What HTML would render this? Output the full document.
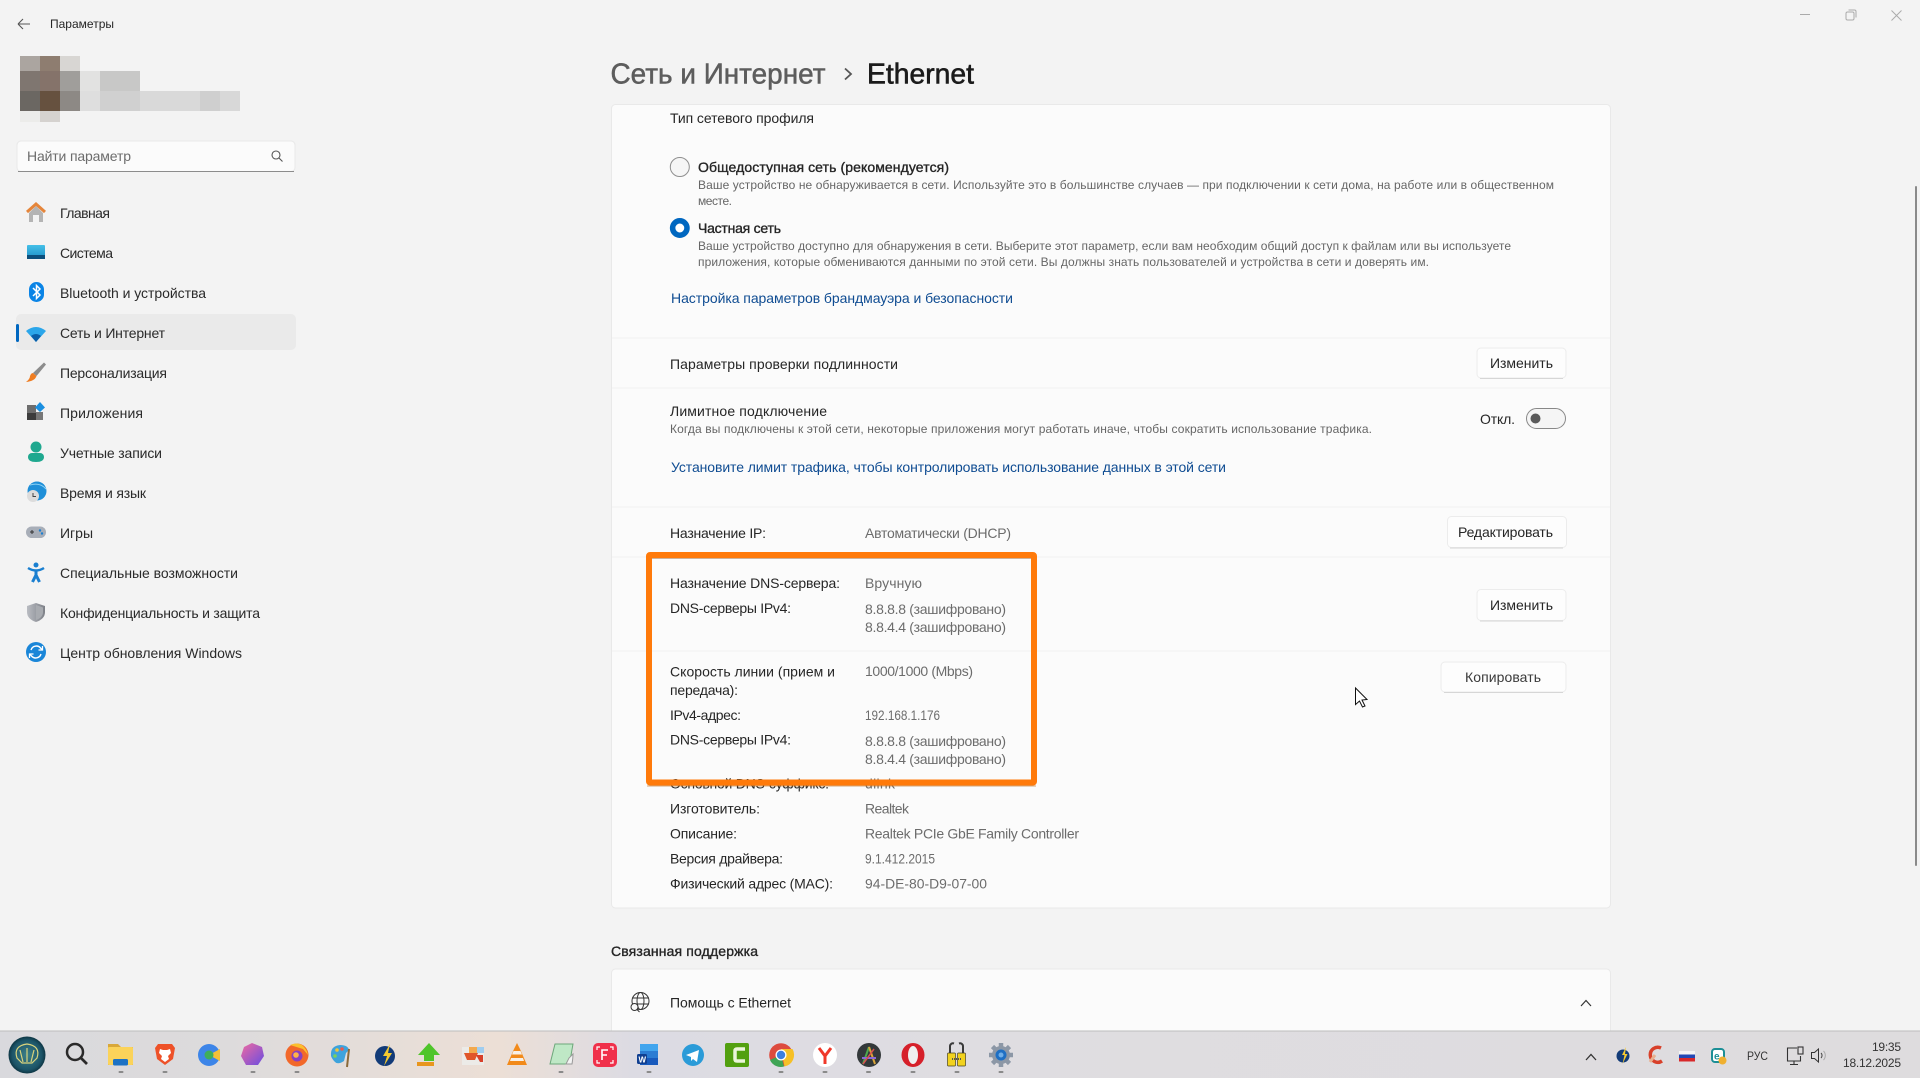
<!DOCTYPE html>
<html lang="ru"><head><meta charset="utf-8"><title>Параметры</title>
<style>
html,body{margin:0;padding:0;background:#f3f3f3;overflow:hidden;width:1920px;height:1078px}
svg{display:block;position:absolute;left:0;top:0;filter:blur(.3px)}
text{font-family:"Liberation Sans","Noto Sans CJK SC",sans-serif;font-size:14px;fill:#262626;white-space:pre}
.s{font-size:12px;fill:#666}
.v{fill:#6c6c6c}
.b{stroke:#1f1f1f;stroke-width:.35px}
.l{fill:#0f4c92}
.n{fill:#2a2a2a}
</style></head><body>
<svg width="1920" height="1078" viewBox="0 0 1920 1078" xmlns="http://www.w3.org/2000/svg">
<defs>
<linearGradient id="tb" x1="0" x2="1" y1="0" y2="0"><stop offset="0" stop-color="#d9d9dd"/><stop offset=".12" stop-color="#dddbdc"/><stop offset=".26" stop-color="#ecdfd6"/><stop offset=".33" stop-color="#dcdbe3"/><stop offset=".5" stop-color="#dfdde1"/><stop offset="1" stop-color="#dedcde"/></linearGradient>
<linearGradient id="sh" x1="0" x2="1"><stop offset="0" stop-color="#b9bcc2"/><stop offset="1" stop-color="#7d8087"/></linearGradient>
<linearGradient id="sys" x1="0" x2="0" y1="0" y2="1"><stop offset="0" stop-color="#45c0e8"/><stop offset="1" stop-color="#1c8ec6"/></linearGradient>
<linearGradient id="poly" x1="0" x2="1" y1="0" y2="1"><stop offset="0" stop-color="#f06aa0"/><stop offset="1" stop-color="#6a4de0"/></linearGradient>
<radialGradient id="orb"><stop offset="0" stop-color="#3d8088"/><stop offset=".8" stop-color="#1c5468"/><stop offset="1" stop-color="#0e3644"/></radialGradient>
</defs>

<rect width="1920" height="1078" fill="#f3f3f3"/>

<!-- title bar -->
<path d="M18 24H30M18 24l5-5M18 24l5 5" fill="none" stroke="#555" stroke-width="1.1"/>
<text x="50" y="28" style="font-size:12px" textLength="64">Параметры</text>
<g fill="none" stroke="#aaa" stroke-width="1"><path d="M1800 14.5h10"/><rect x="1846" y="12" width="8" height="8" rx="1.5"/><path d="M1848.5 10h6a1.5 1.5 0 0 1 1.500 1.500v6"/><path d="M1891.500 10.500l10 10M1901.500 10.500l-10 10"/></g>

<!-- blurred account -->
<g>
<rect x="20" y="56" width="20" height="15" fill="#aba5a0"/><rect x="40" y="56" width="20" height="15" fill="#8e7d70"/><rect x="60" y="56" width="20" height="15" fill="#d8d6d3"/>
<rect x="20" y="71" width="20" height="20" fill="#7f7670"/><rect x="40" y="71" width="20" height="20" fill="#85736a"/><rect x="60" y="71" width="20" height="20" fill="#a09e9b"/><rect x="80" y="71" width="20" height="20" fill="#e2e2e1"/><rect x="100" y="71" width="40" height="20" fill="#c8c8c7"/>
<rect x="20" y="91" width="20" height="20" fill="#6b6762"/><rect x="40" y="91" width="20" height="20" fill="#66513f"/><rect x="60" y="91" width="20" height="20" fill="#8d8985"/><rect x="80" y="91" width="20" height="20" fill="#dedede"/><rect x="100" y="91" width="40" height="20" fill="#d0d0d0"/><rect x="140" y="91" width="60" height="20" fill="#d9d9d9"/><rect x="200" y="91" width="20" height="20" fill="#cfcfcf"/><rect x="220" y="91" width="20" height="20" fill="#d8d8d8"/>
<rect x="20" y="111" width="20" height="11" fill="#ececea"/><rect x="40" y="111" width="20" height="11" fill="#d5d2cf"/>
</g>

<!-- search box -->
<rect x="17" y="141" width="278" height="30.500" rx="4" fill="#fbfbfb" stroke="#e8e8e8"/>
<path d="M18 171.500H294" stroke="#8c8c8c"/>
<text x="27" y="161" class="v" textLength="104">Найти параметр</text>
<circle cx="276" cy="155" r="4" fill="none" stroke="#555" stroke-width="1.100"/><path d="M279 158l3.500 3.500" stroke="#555" stroke-width="1.100"/>

<!-- nav -->
<rect x="16" y="314" width="280" height="36" rx="5" fill="#eaeaea"/>
<rect x="16" y="324" width="3" height="18" rx="1.500" fill="#0067c0"/>
<g class="nav">
<text class="n" x="60" y="218" textLength="50">Главная</text>
<text class="n" x="60" y="258" textLength="53">Система</text>
<text class="n" x="60" y="298" textLength="146">Bluetooth и устройства</text>
<text class="n" x="60" y="338" textLength="105">Сеть и Интернет</text>
<text class="n" x="60" y="378" textLength="107">Персонализация</text>
<text class="n" x="60" y="418" textLength="83">Приложения</text>
<text class="n" x="60" y="458" textLength="102">Учетные записи</text>
<text class="n" x="60" y="498" textLength="86">Время и язык</text>
<text class="n" x="60" y="538" textLength="33">Игры</text>
<text class="n" x="60" y="578" textLength="178">Специальные возможности</text>
<text class="n" x="60" y="618" textLength="200">Конфиденциальность и защита</text>
<text class="n" x="60" y="658" textLength="182">Центр обновления Windows</text>
</g>
<!-- nav icons -->
<path d="M29 213L36 206L43 213V222H39V215H33V222H29Z" fill="#b4b4b4"/><path d="M27 212L36 204L45 212" fill="none" stroke="#e5853a" stroke-width="3"/>
<rect x="27" y="245" width="18" height="14" rx="1" fill="url(#sys)"/><rect x="27" y="255" width="18" height="4" fill="#0c4f7c"/>
<rect x="29" y="282" width="15" height="20" rx="7.500" fill="#0a84e6"/><path d="M33 288L40 295L36.500 298.500V285.500L40 289L33 296" fill="none" stroke="#fff" stroke-width="1.500"/>
<path d="M26 331Q36 323 46 331L36 342Z" fill="#2ba6ea"/><path d="M31 336Q36 332 41 336L36 342Z" fill="#0a5ea8"/>
<path d="M44 362.500L46 364.500L36.500 376L33 373Z" fill="#8c8c8c"/><path d="M33 373L36.500 376Q35 381 26 382Q30 379 30 376Q31 373 33 373Z" fill="#ef7d22"/>
<rect x="27" y="405" width="9" height="8" fill="#6d6d6d"/><rect x="27" y="413" width="9" height="7" fill="#3c3c3c"/><rect x="36" y="412" width="7" height="8" fill="#777"/><path d="M40 402L45 407.500L40 412L35 407.500Z" fill="#1a8fe0"/>
<circle cx="36" cy="447" r="5.500" fill="#1fa88f"/><path d="M28 457a4 4 0 0 1 4-4h8a4 4 0 0 1 4 4q0 5-8 5t-8-5z" fill="#1fa88f"/>
<circle cx="37" cy="491" r="9.500" fill="#1f8fd8"/><path d="M30 485Q40 482 46 489" stroke="#8fd3f5" fill="none"/><circle cx="33" cy="496" r="6" fill="#dcdcdc"/><path d="M33 493v3.500h3" fill="none" stroke="#444"/>
<rect x="26" y="526.500" width="20" height="11.500" rx="5.700" fill="#a8aeb8"/><path d="M30 532h4M32 530v4" stroke="#333"/><circle cx="40" cy="530.500" r="1.200" fill="#1d7fd0"/><circle cx="42" cy="533.500" r="1.200" fill="#1d7fd0"/>
<circle cx="36" cy="565" r="2.500" fill="#1a7fd0"/><path d="M28 568Q36 573 44 568" fill="none" stroke="#1a7fd0" stroke-width="2.500"/><path d="M36 570V575L32.500 582M36 575L39.500 582" fill="none" stroke="#1a7fd0" stroke-width="3"/>
<path d="M36 603L45 606V612Q45 619 36 622Q27 619 27 612V606Z" fill="url(#sh)"/><path d="M36 605L43 607.500V612Q43 617.500 36 620Z" fill="#a8abb0"/>
<circle cx="36" cy="652" r="10" fill="#1a86d8"/><path d="M31 650a5.500 5.500 0 0 1 9.500-2l1.500 1.500M41 654a5.500 5.500 0 0 1-9.500 2L30 654.500" fill="none" stroke="#fff" stroke-width="1.400"/><path d="M42.500 646v4h-4M29.500 658v-4h4" fill="none" stroke="#fff" stroke-width="1.300"/>

<!-- header -->
<text x="610.500" y="83.500" textLength="215" lengthAdjust="spacingAndGlyphs" style="font-size:28.500px;fill:#5d5d5d;stroke:#5d5d5d;stroke-width:.5px">Сеть и Интернет</text>
<path d="M845 68.500l6 5.500-6 5.500" fill="none" stroke="#555" stroke-width="1.800"/>
<text x="867" y="83.500" textLength="107" lengthAdjust="spacingAndGlyphs" style="font-size:28.500px;fill:#1b1b1b;stroke:#1b1b1b;stroke-width:.6px">Ethernet</text>

<!-- card 1 -->
<rect x="611.500" y="104.500" width="999" height="803.500" rx="4" fill="#fbfbfb" stroke="#e9e9e9"/>
<path d="M612 338H1610M612 388H1610M612 507H1610M612 557H1610M612 651H1610" stroke="#f1f1f1"/>

<text x="670" y="123" textLength="144">Тип сетевого профиля</text>
<circle cx="679.800" cy="167" r="9.500" fill="#f6f6f6" stroke="#8f8f8f"/>
<text class="b" x="698" y="172" textLength="251">Общедоступная сеть (рекомендуется)</text>
<text class="s" x="698" y="189" textLength="856">Ваше устройство не обнаруживается в сети. Используйте это в большинстве случаев — при подключении к сети дома, на работе или в общественном</text>
<text class="s" x="698" y="205" textLength="34">месте.</text>
<circle cx="679.800" cy="228" r="7.200" fill="#fff" stroke="#0067c0" stroke-width="5.500"/>
<text class="b" x="698" y="233" textLength="83">Частная сеть</text>
<text class="s" x="698" y="250" textLength="813">Ваше устройство доступно для обнаружения в сети. Выберите этот параметр, если вам необходим общий доступ к файлам или вы используете</text>
<text class="s" x="698" y="266" textLength="731">приложения, которые обмениваются данными по этой сети. Вы должны знать пользователей и устройства в сети и доверять им.</text>
<text class="l" x="671" y="303" textLength="342">Настройка параметров брандмауэра и безопасности</text>

<text x="670" y="369" textLength="228">Параметры проверки подлинности</text>
<g><rect x="1477" y="348" width="89" height="30" rx="4" fill="#fdfdfd" stroke="#ececec"/><path d="M1480 378.500H1563" stroke="#d6d6d6"/><text x="1490" y="368" textLength="63">Изменить</text></g>

<text x="670" y="416" textLength="157">Лимитное подключение</text>
<text class="s" x="670" y="433" textLength="702">Когда вы подключены к этой сети, некоторые приложения могут работать иначе, чтобы сократить использование трафика.</text>
<text class="l" x="671" y="472" textLength="555">Установите лимит трафика, чтобы контролировать использование данных в этой сети</text>
<text x="1480" y="424" textLength="35">Откл.</text>
<rect x="1526.500" y="408.500" width="39" height="20" rx="10" fill="#f5f5f5" stroke="#888"/><circle cx="1535.500" cy="418.500" r="5" fill="#5a5a5a"/>

<text x="670" y="538" textLength="96">Назначение IP:</text>
<text class="v" x="865" y="538" textLength="146">Автоматически (DHCP)</text>
<g><rect x="1447.500" y="516.500" width="119" height="31" rx="4" fill="#fdfdfd" stroke="#ececec"/><path d="M1450 548H1563" stroke="#d6d6d6"/><text x="1458" y="537" textLength="95">Редактировать</text></g>
<g><rect x="1477" y="589.500" width="89" height="31" rx="4" fill="#fdfdfd" stroke="#ececec"/><path d="M1480 621H1563" stroke="#d6d6d6"/><text x="1490" y="610" textLength="63">Изменить</text></g>
<g><rect x="1441" y="662" width="125" height="30" rx="4" fill="#fdfdfd" stroke="#ececec"/><path d="M1444 692.500H1563" stroke="#d6d6d6"/><text x="1465" y="682" textLength="76" style="fill:#3a3a3a">Копировать</text></g>

<!-- clipped row -->
<text x="670" y="788.500" textLength="159">Основной DNS-суффикс:</text>
<text class="v" x="865" y="788.500" textLength="30">dlink</text>

<!-- orange highlight -->
<rect x="649" y="555" width="385" height="227.500" rx="1" fill="none" stroke="#ff7a0a" stroke-width="6"/>
<path d="M652 558.500H1031" stroke="#a06a3a" stroke-opacity=".5"/>
<path d="M647 786H1036" stroke="#b96a20" stroke-opacity=".6"/>

<text x="670" y="588" textLength="170">Назначение DNS-сервера:</text>
<text class="v" x="865" y="588" textLength="57">Вручную</text>
<text x="670" y="613" textLength="121">DNS-серверы IPv4:</text>
<text class="v" x="865" y="614" textLength="141">8.8.8.8 (зашифровано)</text>
<text class="v" x="865" y="632" textLength="141">8.8.4.4 (зашифровано)</text>
<text x="670" y="676.500" textLength="165">Скорость линии (прием и</text>
<text x="670" y="695" textLength="68">передача):</text>
<text class="v" x="865" y="676" textLength="108">1000/1000 (Mbps)</text>
<text x="670" y="720" textLength="71">IPv4-адрес:</text>
<text class="v" x="865" y="720" textLength="75" lengthAdjust="spacingAndGlyphs">192.168.1.176</text>
<text x="670" y="744.500" textLength="121">DNS-серверы IPv4:</text>
<text class="v" x="865" y="746" textLength="141">8.8.8.8 (зашифровано)</text>
<text class="v" x="865" y="764" textLength="141">8.8.4.4 (зашифровано)</text>

<text x="670" y="813.500" textLength="90">Изготовитель:</text>
<text class="v" x="865" y="813.500" textLength="44">Realtek</text>
<text x="670" y="838.500" textLength="67">Описание:</text>
<text class="v" x="865" y="838.500" textLength="214">Realtek PCIe GbE Family Controller</text>
<text x="670" y="863.500" textLength="113">Версия драйвера:</text>
<text class="v" x="865" y="863.500" textLength="70" lengthAdjust="spacingAndGlyphs">9.1.412.2015</text>
<text x="670" y="888.500" textLength="163">Физический адрес (MAC):</text>
<text class="v" x="865" y="888.500" textLength="122" lengthAdjust="spacingAndGlyphs">94-DE-80-D9-07-00</text>

<text class="b" x="611" y="956" textLength="147">Связанная поддержка</text>

<!-- card 2 -->
<rect x="611.500" y="969" width="999" height="80" rx="4" fill="#fbfbfb" stroke="#e9e9e9"/>
<g fill="none" stroke="#333" stroke-width="1"><circle cx="640.500" cy="1001" r="8.500"/><ellipse cx="640.500" cy="1001" rx="3.500" ry="8.500"/><path d="M632 998h17M632 1004h17"/><circle cx="634.500" cy="1007" r="3.500" fill="#fbfbfb"/><path d="M637 1009.500l2.500 2.500"/></g>
<text x="670" y="1007.500" textLength="121">Помощь с Ethernet</text>
<path d="M1581 1006l5-5.500 5 5.500" fill="none" stroke="#333" stroke-width="1.200"/>

<!-- cursor -->
<path d="M1355.500 688V704.500L1359.500 701L1362.500 707L1365 706L1362 700L1367 699.500Z" fill="#fff" stroke="#111" stroke-width="1"/>
<!-- scrollbar -->
<rect x="1915" y="186" width="2" height="680" rx="1" fill="#8a8a8a"/>

<!-- taskbar -->
<rect x="0" y="1031" width="1920" height="47" fill="url(#tb)"/>
<path d="M0 1031H1920" stroke="#bdbdbd"/>

<circle cx="27" cy="1055" r="18.500" fill="url(#orb)"/><path d="M17 1058Q13 1046 27 1044Q41 1046 37 1058L32 1063H22Z M23 1062L20 1050M27 1062V1048M31 1062L34 1050" fill="none" stroke="#d8d27c" stroke-width="1.200"/>
<circle cx="75" cy="1052" r="8" fill="none" stroke="#2a2a2a" stroke-width="2.500"/><path d="M81 1058l6 6" stroke="#2a2a2a" stroke-width="2.700"/>
<path d="M108 1044h10l3 3h12v18h-25z" fill="#d9a83a"/><rect x="108" y="1047" width="25" height="18" rx="1" fill="#fbd35a"/><rect x="113" y="1059" width="15" height="6.500" rx="1.500" fill="#1d72c4"/>
<path d="M158 1044h14l3 4-2 11-8 6-8-6-2-11z" fill="#ee5128"/><path d="M160 1049l3 1h4l3-1 1 4-3 3 1 3-4 3-4-3 1-3-3-3z" fill="#fff"/>
<circle cx="209" cy="1055" r="11" fill="#3d85e8"/><path d="M209 1055l11-6v12z" fill="#f4c038"/><circle cx="209" cy="1055" r="4.500" fill="#3fae5a"/>
<path d="M252 1043l10 4 2 9-6 9h-12l-5-9 3-9z" fill="url(#poly)"/>
<circle cx="297" cy="1055" r="11.500" fill="#f2682a"/><path d="M290 1045q7-3 12 0q5 4 6 10l-5-6z" fill="#fbc02d"/><circle cx="297" cy="1056" r="5.500" fill="#8a3fc0"/><circle cx="296" cy="1055" r="2.800" fill="#ffb347"/>
<path d="M331 1056q-1-10 9-11 8 0 9 5l-3 3-2 8q-6 4-9 1-3-3-4-6z" fill="#3ea3dc"/><circle cx="337" cy="1050" r="1.800" fill="#f2c438"/><circle cx="342" cy="1049" r="1.800" fill="#e85a4f"/><circle cx="335" cy="1056" r="1.800" fill="#7bd15a"/><path d="M349 1049l-2 18" stroke="#8a6a3a" stroke-width="2"/>
<circle cx="385" cy="1056" r="10" fill="#123b78"/><path d="M390 1044l-7 12h4l-3 10 8-13h-4z" fill="#f4c930"/>
<path d="M429 1043l11 12h-6v6h-10v-6h-6z" fill="#4fc52a"/><rect x="417" y="1062" width="17" height="4" fill="#e8961e"/>
<rect x="462" y="1047" width="22" height="18" fill="#ecebe8"/><rect x="476" y="1047" width="8" height="6" fill="#9fcdf0"/><path d="M464 1053h14l-3 7h-8z" fill="#e0562a"/><rect x="469" y="1047" width="8" height="6" fill="#f3a94e"/><path d="M476 1055h7v7h-3z" fill="#d8402a"/>
<path d="M517 1043l3 6 7 16h-20l7-16z" fill="#f28a1a"/><path d="M513.500 1051h7l1.500 3.500h-10zM511 1058h12l1 3h-14z" fill="#f8f0e6"/>
<path d="M555 1044h18l-3 17-4 3h-16z" fill="#bfe8c6" stroke="#6da77a"/><path d="M566 1064l6 0q1-6 1-10l-4 4z" fill="#f3f3f3" stroke="#999"/>
<rect x="593" y="1043" width="24" height="24" rx="5" fill="#f0304a"/><path d="M597 1050v-3h3M613 1050v-3h-3M597 1060v3h3M613 1060v3h-3" fill="none" stroke="#fff" stroke-width="1.200"/><path d="M602 1060v-10h6M602 1055h5" fill="none" stroke="#fff" stroke-width="1.600"/>
<rect x="640" y="1044" width="18" height="7" fill="#41a5ee"/><rect x="640" y="1051" width="18" height="7" fill="#2b7cd3"/><rect x="640" y="1058" width="18" height="7" fill="#185abd"/><rect x="637" y="1054" width="10" height="10" rx="1.500" fill="#103f91"/><text x="638.500" y="1062.500" style="font-size:8px;font-weight:700;fill:#fff">W</text>
<circle cx="693" cy="1055" r="11" fill="#2a9bd8"/><path d="M686 1055l13-5-2 12-4-3-2 2v-4z" fill="#fff"/>
<rect x="725" y="1043" width="24" height="24" rx="2" fill="#52a00f"/><path d="M745 1049h-8q-2 0-2 2v8q0 2 2 2h8" fill="none" stroke="#eaf5d8" stroke-width="3.500"/>
<circle cx="781" cy="1055" r="11.800" fill="#dd4b3e"/><path d="M781 1055l-11 5a11.800 11.800 0 0 0 14 6.500z" fill="#3fa455"/><path d="M781 1049h11.500a11.800 11.800 0 0 1-8 17.500z" fill="#f6c026"/><circle cx="781" cy="1055" r="5.500" fill="#fff"/><circle cx="781" cy="1055" r="4.200" fill="#3d7fe0"/>
<circle cx="825" cy="1055" r="12" fill="#fff"/><path d="M819 1048l6 8 6-8M825 1056v8" fill="none" stroke="#f0382a" stroke-width="3"/>
<circle cx="869" cy="1055" r="12" fill="#33383a"/><path d="M863 1064l6-17" stroke="#4ea84e" stroke-width="2"/><path d="M869 1047l6 17" stroke="#d9a43a" stroke-width="2"/><path d="M862 1058h14" stroke="#8a6ad8" stroke-width="2"/><path d="M874 1049l-11 15" stroke="#d65050" stroke-width="1.500"/>
<ellipse cx="913" cy="1055" rx="11.500" ry="12" fill="#d6202a"/><ellipse cx="913" cy="1055" rx="5" ry="9" fill="#efefef"/>
<rect x="947.500" y="1053" width="8" height="13" rx="1" fill="#f2d21e" stroke="#4a4420" stroke-width=".7"/><rect x="957.500" y="1053" width="8" height="13" rx="1" fill="#f2d21e" stroke="#4a4420" stroke-width=".7"/><path d="M950 1053v-7a3 3 0 0 1 4-2.500M963 1053v-7a3 3 0 0 0-4-2.500" fill="none" stroke="#3a3a3a" stroke-width="2"/><path d="M952 1059h10" stroke="#555" stroke-dasharray="1 1" stroke-width="2"/>
<circle cx="1001" cy="1055" r="9" fill="#8c97a6"/><path d="M1001 1043v5M1001 1062v5M989 1055h5M1008 1055h5M992.500 1046.500l3.500 3.500M1006 1060l3.500 3.500M1009.500 1046.500l-3.500 3.500M996 1060l-3.500 3.500" stroke="#8c97a6" stroke-width="4.500"/><circle cx="1001" cy="1055" r="5.500" fill="#1e6fc4"/><circle cx="1001" cy="1055" r="2.500" fill="#6faee8"/>

<!-- running indicators -->
<g fill="#8a8a8a"><rect x="118.500" y="1071" width="5" height="2" rx="1"/><rect x="162.500" y="1071" width="5" height="2" rx="1"/><rect x="250.500" y="1071" width="5" height="2" rx="1"/><rect x="294.500" y="1071" width="5" height="2" rx="1"/><rect x="558.500" y="1071" width="5" height="2" rx="1"/><rect x="646.500" y="1071" width="5" height="2" rx="1"/><rect x="778.500" y="1071" width="5" height="2" rx="1"/><rect x="822.500" y="1071" width="5" height="2" rx="1"/><rect x="866" y="1071" width="5" height="2" rx="1"/><rect x="910.500" y="1071" width="5" height="2" rx="1"/><rect x="954.500" y="1071" width="5" height="2" rx="1"/><rect x="998.500" y="1071" width="5" height="2" rx="1"/></g>

<!-- tray -->
<path d="M1586 1060l5-5.500 5 5.500" fill="none" stroke="#333" stroke-width="1.300"/>
<circle cx="1623" cy="1056" r="6.500" fill="#123b78"/><path d="M1626 1047l-4 8h2.500l-2 9 5-10h-2.500z" fill="#f4c930"/>
<path d="M1661 1048a7.500 7.500 0 1 0 1 13" fill="none" stroke="#d8402a" stroke-width="3.500"/><path d="M1650 1062l5-7" stroke="#e8b090" stroke-width="3"/>
<rect x="1679" y="1051" width="16" height="3.500" fill="#f4f4f4"/><rect x="1679" y="1054.500" width="16" height="3.500" fill="#2348b4"/><rect x="1679" y="1058" width="16" height="3.500" fill="#d8282a"/>
<rect x="1712" y="1049" width="12" height="13" rx="3" fill="#fff" stroke="#1c8f96" stroke-width="2"/><text x="1714" y="1059.500" style="font-size:10px;font-weight:700;fill:#1c8f96">e</text><circle cx="1722.500" cy="1060.500" r="4" fill="#f0b030"/>
<text x="1747" y="1060" style="font-size:12px;fill:#333" textLength="21" lengthAdjust="spacingAndGlyphs">РУС</text>
<g fill="none" stroke="#333" stroke-width="1.100"><path d="M1797 1048h-9.500v13h13v-5"/><rect x="1798" y="1047" width="5" height="7"/><path d="M1794 1061v3M1790 1064.500h8"/></g>
<path d="M1811.500 1052.500h3l4-3.500v13l-4-3.500h-3z" fill="none" stroke="#333"/><path d="M1821 1053a3.500 3.500 0 0 1 0 5" fill="none" stroke="#444"/><path d="M1823.500 1051a6.500 6.500 0 0 1 0 9" fill="none" stroke="#aaa"/>
<text x="1872" y="1051" style="font-size:12px;fill:#333" textLength="29">19:35</text>
<text x="1843" y="1067" style="font-size:12px;fill:#333" textLength="58">18.12.2025</text>
</svg>
</body></html>
